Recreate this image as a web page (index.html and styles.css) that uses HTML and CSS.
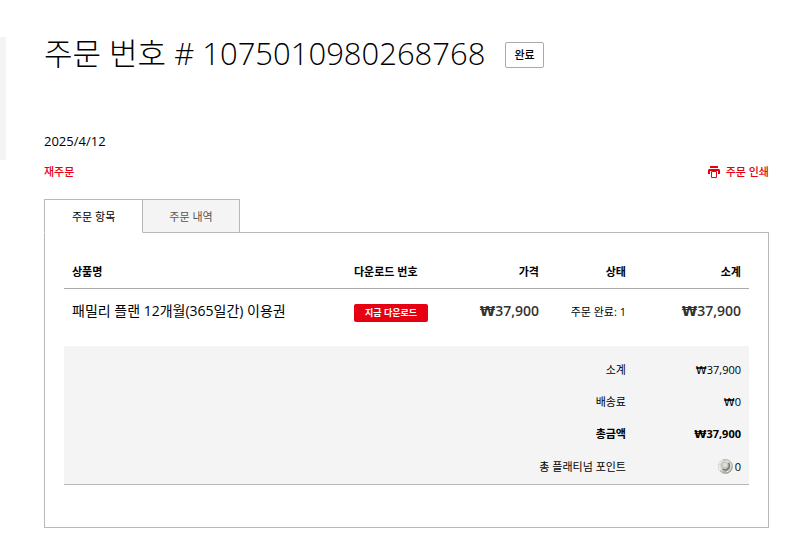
FILE: index.html
```html
<!DOCTYPE html>
<html lang="ko">
<head>
    <meta charset="UTF-8">
    <meta name="viewport" content="width=device-width, initial-scale=1.0">
    <title>주문 번호 # 1075010980268768</title>
    <link rel="stylesheet" href="styles.css">
</head>
<body>
    <div class="page">
        <aside class="sidebar"></aside>
        <main class="content">
            <header class="page-title">
                <h1>주문 번호 # 1075010980268768</h1>
                <span class="order-status">완료</span>
            </header>

            <p class="order-date">2025/4/12</p>

            <div class="order-actions">
                <a href="#" class="action">재주문</a>
                <a href="#" class="action">
                    <svg class="print-icon" viewBox="0 0 12 12" aria-hidden="true">
                        <path d="M2 0h8v2H2zM1 3h10l1 1v4H0V4z" fill="currentColor"/>
                        <path d="M2 5h8v7H2z" fill="#fff"/>
                        <path d="M3.500 5.500h5v6h-5z" fill="#fff" stroke="currentColor"/>
                    </svg>
                    주문 인쇄
                </a>
            </div>

            <nav class="tabs">
                <a href="#items" class="tab active">주문 항목</a>
                <a href="#history" class="tab">주문 내역</a>
            </nav>

            <section class="panel" id="items">
                <table class="order-table">
                    <thead>
                        <tr>
                            <th class="col-name">상품명</th>
                            <th class="col-download">다운로드 번호</th>
                            <th class="col-price">가격</th>
                            <th class="col-status">상태</th>
                            <th class="col-subtotal">소계</th>
                        </tr>
                    </thead>
                    <tbody>
                        <tr>
                            <td class="col-name product-name">패밀리 플랜 12개월(365일간) 이용권</td>
                            <td class="col-download"><button type="button" class="download-btn">지금 다운로드</button></td>
                            <td class="col-price price"><span class="won">₩</span>37,900</td>
                            <td class="col-status">주문 완료: 1</td>
                            <td class="col-subtotal price"><span class="won">₩</span>37,900</td>
                        </tr>
                    </tbody>
                    <tfoot>
                        <tr>
                            <th colspan="4">소계</th>
                            <td><span class="won">₩</span>37,900</td>
                        </tr>
                        <tr>
                            <th colspan="4">배송료</th>
                            <td><span class="won">₩</span>0</td>
                        </tr>
                        <tr class="grand-total">
                            <th colspan="4">총금액</th>
                            <td><span class="won">₩</span>37,900</td>
                        </tr>
                        <tr>
                            <th colspan="4">총 플래티넘 포인트</th>
                            <td>
                                <span class="points">
                                    <svg class="coin-icon" viewBox="0 0 15 15" aria-hidden="true">
                                        <defs>
                                            <linearGradient id="coin" x1="0" y1="0" x2="1" y2="1">
                                                <stop offset="0" stop-color="#b4b4ae"/>
                                                <stop offset="0.4" stop-color="#e4e4e0"/>
                                                <stop offset="1" stop-color="#77776f"/>
                                            </linearGradient>
                                        </defs>
                                        <circle cx="7.5" cy="7.5" r="7" fill="url(#coin)" stroke="#a4a49d" stroke-width="0.8"/>
                                        <path d="M2 11a6.3 6.3 0 0 1 3-9.5" fill="none" stroke="#fff"/>
                                        <path d="M12.5 4.5a6 6 0 0 1-4 8.5" fill="none" stroke="#f8f8f4"/>
                                        <circle cx="7" cy="6.5" r="3.8" fill="#c4c4be"/>
                                        <path d="M10.5 4a4.3 4.3 0 0 1-6 6" fill="none" stroke="#77776f" stroke-width="1.4"/>
                                        <circle cx="7" cy="6" r="2.2" fill="#dededa"/>
                                    </svg>
                                    0
                                </span>
                            </td>
                        </tr>
                    </tfoot>
                </table>
            </section>
        </main>
    </div>
</body>
</html>
```

FILE: styles.css
```css
* {
    margin: 0;
    padding: 0;
    box-sizing: border-box;
}

body {
    font-family: 'Open Sans', 'Noto Sans CJK KR', sans-serif;
    font-size: 11px;
    line-height: 16px;
    background-color: #fff;
    color: #000;
}

a {
    color: inherit;
    text-decoration: none;
}

.page {
    display: flex;
    align-items: flex-start;
    padding-top: 37px;
}

.sidebar {
    width: 6px;
    height: 123px;
    background-color: #f4f4f4;
}

.content {
    flex: 1;
    padding: 0 31px 0 38px;
}

.page-title {
    display: flex;
    align-items: center;
    gap: 20px;
    height: 36px;
}

.page-title h1 {
    padding-bottom: 4px;
    font-size: 31px;
    font-weight: 300;
    line-height: 36px;
}

.order-status {
    padding: 4px 8px;
    border: 1px solid #aaa;
    border-radius: 2px;
    font-weight: 500;
}

.order-date {
    margin-top: 60px;
    font-size: 13px;
}

.order-actions {
    display: flex;
    justify-content: space-between;
    margin-top: 15px;
}

.action {
    display: flex;
    align-items: center;
    gap: 6px;
    color: #e60012;
    font-weight: 500;
}

.print-icon {
    width: 12px;
    height: 12px;
}

/* Tabs */
.tabs {
    display: flex;
    margin-top: 19px;
    margin-bottom: -1px;
}

.tab {
    padding: 9px 26px 7px;
    border: 1px solid #b8b8b8;
    border-left: none;
    background-color: #f4f4f4;
    color: #555;
}

.tab.active {
    padding-left: 27px;
    padding-right: 27px;
    border-left: 1px solid #b8b8b8;
    border-bottom-color: #fff;
    background-color: #fff;
    color: #000;
    z-index: 1;
}

.panel {
    padding: 23px 19px 42px;
    border: 1px solid #b8b8b8;
}

/* Order table */
.order-table {
    width: 100%;
    border-collapse: collapse;
    table-layout: fixed;
}

.order-table th,
.order-table td {
    padding: 8px;
    text-align: right;
    white-space: nowrap;
}

.order-table thead th {
    border-bottom: 1px solid #aaa;
    font-weight: 700;
}

.order-table tbody td {
    height: 57px;
    padding: 15px 8px;
    vertical-align: top;
}

.order-table .col-name {
    text-align: left;
}

.order-table .col-download {
    width: 100px;
    text-align: left;
}

.col-price {
    width: 101px;
}

.col-status {
    width: 87px;
}

.col-subtotal {
    width: 115px;
}

.order-table .product-name,
.order-table .price {
    padding-top: 14px;
    font-size: 14px;
}

.price {
    color: #333;
    font-weight: 600;
}

.won {
    font-family: 'DejaVu Sans', sans-serif;
    line-height: 1;
}

.download-btn {
    height: 18px;
    padding: 0 11px;
    border: none;
    border-radius: 2px;
    background-color: #e60012;
    color: #fff;
    font-family: inherit;
    font-size: 9px;
    font-weight: 700;
    line-height: 16px;
    cursor: pointer;
}

.order-table tfoot {
    background-color: #f4f4f4;
    border-bottom: 1px solid #b8b8b8;
}

.order-table tfoot th {
    font-weight: 400;
}

.order-table tfoot .grand-total th,
.order-table tfoot .grand-total td {
    font-weight: 700;
}

.order-table tfoot tr:first-child > * {
    padding-top: 16px;
}

.order-table tfoot tr:last-child > * {
    padding-top: 9px;
    padding-bottom: 9px;
}

.points {
    display: flex;
    align-items: center;
    justify-content: flex-end;
    gap: 2px;
}

.coin-icon {
    width: 15px;
    height: 15px;
}
```
